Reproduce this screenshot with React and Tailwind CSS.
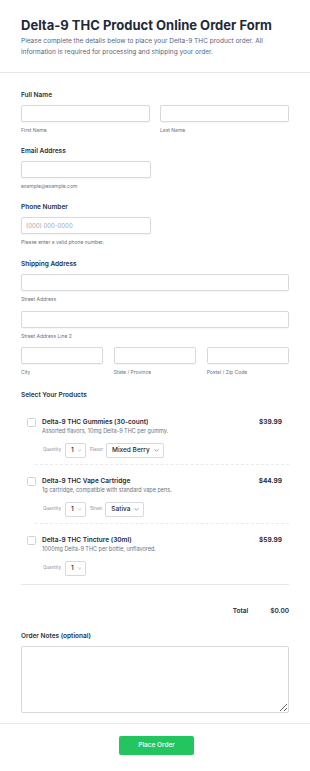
import React from 'react';

function Chevron() {
  return (
    <svg width="5" height="3" viewBox="0 0 10 6" fill="none" stroke="#6b7280" strokeWidth="1.4" strokeLinecap="round" strokeLinejoin="round">
      <path d="M1.5 1l3.5 3.5L8.5 1" />
    </svg>
  );
}

function Label({ children }) {
  return <div className="text-[6.5px] leading-[8px] font-semibold text-[#263245] mb-[6px]">{children}</div>;
}

function Sub({ children }) {
  return <div className="text-[5px] leading-[6px] text-[#6b7280] mt-[5px]">{children}</div>;
}

function Input({ className = '', placeholder = '' }) {
  return (
    <div className={`h-[17px] border border-[#d6d9de] rounded-[2px] bg-white flex items-center px-[4px] shadow-[0_0.5px_1px_rgba(0,0,0,0.04)] ${className}`}>
      {placeholder && <span className="text-[6px] text-[#a0a6b1]">{placeholder}</span>}
    </div>
  );
}

function Select({ value, width }) {
  return (
    <div className={`h-[15px] border border-[#d6d9de] rounded-[2px] bg-white flex items-center justify-between gap-[4px] pl-[5px] pr-[4px] whitespace-nowrap shrink-0 ${width}`}>
      <span className="text-[6.5px] font-medium text-[#1f2937]">{value}</span>
      <Chevron />
    </div>
  );
}

function Product({ title, desc, price, extraLabel, extraValue, extraWidth, divider }) {
  return (
    <>
      <div className="flex pl-[6px] pr-[7px] pt-[12px] pb-[6px]">
        <div className="w-[9px] h-[9px] border border-[#cfd3d9] rounded-[1.5px] bg-white shrink-0" />
        <div className="ml-[6px] flex-1">
          <div className="text-[6.5px] leading-[9px] font-semibold text-[#1f2937]">{title}</div>
          <div className="text-[5.5px] leading-[7px] text-[#6b7280] mt-[1px]">{desc}</div>
          <div className="flex items-center mt-[8px]">
            <span className="text-[4.5px] text-[#8a909b] ml-[1px] mr-[4px]">Quantity</span>
            <Select value="1" width="w-[21px]" />
            {extraLabel && (
              <>
                <span className="text-[4.5px] text-[#8a909b] ml-[4px] mr-[3px]">{extraLabel}</span>
                <Select value={extraValue} width={extraWidth} />
              </>
            )}
          </div>
        </div>
        <div className="text-[6.5px] leading-[9px] font-bold text-[#1f2937]">{price}</div>
      </div>
      {divider && <div className="ml-[14px] border-t border-dashed border-[#e8eaed]" />}
    </>
  );
}

export default function App() {
  return (
    <div className="min-h-screen bg-white font-[Inter,sans-serif]">
      <div className="px-[21px] pt-[17px] pb-[15px] border-b border-[#e5e7eb]">
        <h1 className="text-[13px] leading-[16px] font-bold text-[#1f2937]">Delta-9 THC Product Online Order Form</h1>
        <p className="text-[6.5px] leading-[10.5px] text-[#56657f] mt-[3px]">
          Please complete the details below to place your Delta-9 THC product order. All information is required for processing and shipping your order.
        </p>
      </div>

      <div className="px-[21px] pt-[18px]">
        <Label>Full Name</Label>
        <div className="grid grid-cols-2 gap-[10px]">
          <div>
            <Input />
            <Sub>First Name</Sub>
          </div>
          <div>
            <Input />
            <Sub>Last Name</Sub>
          </div>
        </div>

        <div className="mt-[14px]">
          <Label>Email Address</Label>
          <Input className="w-[130px]" />
          <Sub>example@example.com</Sub>
        </div>

        <div className="mt-[14px]">
          <Label>Phone Number</Label>
          <Input className="w-[130px]" placeholder="(000) 000-0000" />
          <Sub>Please enter a valid phone number.</Sub>
        </div>

        <div className="mt-[15px]">
          <Label>Shipping Address</Label>
          <Input />
          <Sub>Street Address</Sub>
          <Input className="mt-[8.5px]" />
          <Sub>Street Address Line 2</Sub>
          <div className="grid grid-cols-3 gap-[10.5px] mt-[8.5px]">
            <div>
              <Input />
              <Sub>City</Sub>
            </div>
            <div>
              <Input />
              <Sub>State / Province</Sub>
            </div>
            <div>
              <Input />
              <Sub>Postal / Zip Code</Sub>
            </div>
          </div>
        </div>

        <div className="mt-[16px]">
          <div className="text-[6.5px] leading-[8px] font-semibold text-[#263245]">Select Your Products</div>
          <div className="mt-[7px] border-b border-[#e5e7eb] pb-[2px]">
            <Product
              title="Delta-9 THC Gummies (30-count)"
              desc="Assorted flavors, 10mg Delta-9 THC per gummy."
              price="$39.99"
              extraLabel="Flavor"
              extraValue="Mixed Berry"
              extraWidth="w-auto"
              divider
            />
            <Product
              title="Delta-9 THC Vape Cartridge"
              desc="1g cartridge, compatible with standard vape pens."
              price="$44.99"
              extraLabel="Strain"
              extraValue="Sativa"
              extraWidth="w-auto"
              divider
            />
            <Product
              title="Delta-9 THC Tincture (30ml)"
              desc="1000mg Delta-9 THC per bottle, unflavored."
              price="$59.99"
            />
          </div>
        </div>

        <div className="flex justify-end mt-[22px] text-[6.5px] leading-[8px] font-semibold text-[#1f2937]">
          <span>Total</span>
          <span className="ml-[22px]">$0.00</span>
        </div>

        <div className="mt-[17px]">
          <Label>Order Notes (optional)</Label>
          <textarea className="block w-full h-[67px] border border-[#d6d9de] rounded-[2px] bg-white outline-none" />
        </div>
      </div>

      <div className="mt-[10px] border-t border-[#e5e7eb] flex justify-center pt-[12px] pb-[17px]">
        <button className="w-[75px] h-[19px] bg-[#22c55e] rounded-[2px] text-white text-[6.5px] font-medium ml-[3px]">Place Order</button>
      </div>
    </div>
  );
}
